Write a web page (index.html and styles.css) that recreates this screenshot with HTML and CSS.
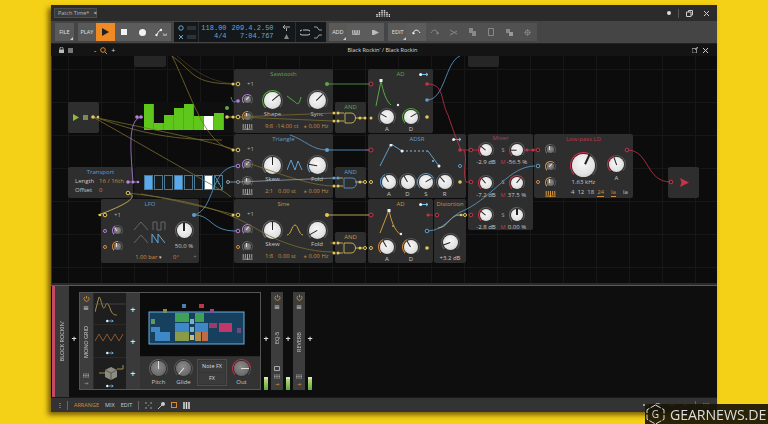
FILE: index.html
```html
<!DOCTYPE html>
<html lang="en">
<head>
    <meta charset="UTF-8">
    <title>Patch Time</title>
    <link rel="stylesheet" href="styles.css">
</head>
<body>
<svg class="defs" width="0" height="0">
    <symbol id="link" viewBox="0 0 10 5">
        <circle cx="1.6" cy="2.5" r="1.5" fill="#e8f4fa"/>
        <path d="M3 2.5H9M7 1l2 1.5L7 4" stroke="#6fc0e8" stroke-width="1" fill="none"/>
    </symbol>
    <symbol id="power" viewBox="0 0 8 8">
        <path d="M2.3 2.2a2.8 2.8 0 1 0 3.4 0M4 1v3" stroke="#d98a30" stroke-width="1" fill="none"/>
    </symbol>
    <symbol id="folder" viewBox="0 0 8 8">
        <path d="M1 1.5h6v5H1z" fill="#9a9a9a"/><path d="M1 3h6" stroke="#444" stroke-width=".7"/>
    </symbol>
    <symbol id="piano" viewBox="0 0 12 7">
        <path d="M1 0v5M3.5 0v5M6 0v7M8.5 0v5M11 0v5M0 6h12" stroke="currentColor" stroke-width="1.1" fill="none"/>
    </symbol>
    <symbol id="dots" viewBox="0 0 8 6">
        <path d="M0 1h2M3 1h2M6 1h2M0 3h2M3 3h2M6 3h2M0 5h2M3 5h2M6 5h2" stroke="#bbb" stroke-width="1"/>
    </symbol>
</svg>

<div class="window">
    <!-- title bar -->
    <div class="titlebar">
        <div class="tab">Patch Time* <span class="tab-x">×</span></div>
        <svg class="logo" width="14" height="9" viewBox="0 0 14 9">
            <path d="M1 5v3M3.5 3v5M6 1v7M8.5 1v7M11 3v5M13.500 5v3" stroke="#ddd" stroke-width="1.500" stroke-dasharray="1.200 .6"/>
        </svg>
        <div class="win-btns">
            <span class="win-dot"></span>
            <span class="win-sep"></span>
            <svg width="7" height="7" viewBox="0 0 7 7"><path d="M.5 2h4.500v4.500H.5zM2.500 2V.5H6.500v4.500H5" stroke="#ccc" fill="none"/></svg>
            <svg width="7" height="7" viewBox="0 0 7 7"><path d="M1 1l5 5M6 1l-5 5" stroke="#ccc"/></svg>
        </div>
    </div>

    <!-- toolbar -->
    <div class="toolbar">
        <div class="btn-group">
            <div class="btn wide corner">FILE</div>
        </div>
        <div class="btn-group">
            <div class="btn wide">PLAY</div>
            <div class="btn play"><svg width="8" height="8" viewBox="0 0 8 8"><path d="M1 0l7 4-7 4z" fill="#222"/></svg></div>
            <div class="btn"><span class="stop"></span></div>
            <div class="btn"><span class="rec"></span></div>
            <div class="btn"><svg width="12" height="9" viewBox="0 0 12 9"><path d="M1 7c2 0 2-5 5-5" stroke="#eee" fill="none"/><circle cx="1.500" cy="7" r="1.200" fill="#eee"/><circle cx="6" cy="2" r="1.200" fill="#eee"/><path d="M8 5l1 3 1-2 1 2 1-3" stroke="#ccc" stroke-width=".6" fill="none"/></svg></div>
        </div>
        <div class="display">
            <div class="disp-meter">
                <div><svg width="6" height="6" viewBox="0 0 6 6"><circle cx="3" cy="3" r="2.200" stroke="#6aa6c8" fill="none"/></svg><i></i></div>
                <div><svg width="6" height="6" viewBox="0 0 6 6"><path d="M1 1l4 4M5 1l-4 4" stroke="#6aa6c8"/></svg><i></i></div>
            </div>
            <div class="disp-nums">
                <span>118.00</span><span>209.4.2.50</span>
                <span>4/4</span><span>7:04.767</span>
            </div>
            <div class="disp-side">
                <svg width="7" height="6" viewBox="0 0 7 6"><path d="M0 2h7M2 0l-2 2 2 2M3.500 3v3" stroke="#aaa" fill="none"/></svg>
                <svg width="5" height="5" viewBox="0 0 5 5"><path d="M2.500 0L5 5H0z" fill="#888"/></svg>
            </div>
            <div class="disp-loop">
                <svg width="10" height="7" viewBox="0 0 10 7"><path d="M3 1h5a1.500 1.500 0 0 1 0 5H2a1.500 1.500 0 0 1 0-5" stroke="#bbb" fill="none"/></svg>
                <div class="disp-arrows">
                    <svg width="8" height="5" viewBox="0 0 8 5"><path d="M0 1h3l2 3h3" stroke="#999" fill="none"/></svg>
                    <svg width="8" height="5" viewBox="0 0 8 5"><path d="M0 4h3l2-3h3" stroke="#999" fill="none"/></svg>
                </div>
            </div>
        </div>
        <div class="btn-group">
            <div class="btn wide corner">ADD</div>
            <div class="btn"><svg width="8" height="7"><use href="#piano" color="#eee"/></svg></div>
            <div class="btn"><svg width="7" height="7" viewBox="0 0 7 7"><path d="M0 1h2l5 2.500L2 6H0z" fill="#bbb"/></svg></div>
        </div>
        <div class="btn-group">
            <div class="btn wide corner">EDIT</div>
            <div class="btn"><svg width="9" height="6" viewBox="0 0 9 6"><path d="M1 5c1-5 5-5 7-1M1 5V3M1 5l2-1" stroke="#eee" fill="none"/></svg></div>
            <div class="btn off"><svg width="9" height="6" viewBox="0 0 9 6"><path d="M8 5C7 0 3 0 1 4M8 5V3M8 5L6 4" stroke="#888" fill="none"/></svg></div>
            <div class="btn off"><svg width="8" height="7" viewBox="0 0 8 7"><path d="M1 1l7 4M1 6l7-4" stroke="#888"/></svg></div>
            <div class="btn off"><svg width="7" height="8" viewBox="0 0 7 8"><path d="M0 0h4v5H0zM3 3h4v5H3z" fill="#888"/></svg></div>
            <div class="btn off"><svg width="6" height="8" viewBox="0 0 6 8"><path d="M.5.5h5v7h-5z" stroke="#888" fill="none"/></svg></div>
            <div class="btn off"><svg width="7" height="7" viewBox="0 0 7 7"><path d="M0 0h4v4H0z" fill="#888"/><path d="M3 3h4v4H3z" fill="#999"/></svg></div>
            <div class="btn off"><svg width="7" height="7" viewBox="0 0 7 7"><circle cx="3.500" cy="3.500" r="2.300" stroke="#888" fill="none"/><path d="M3.500 0v7M0 3.500h7" stroke="#888" stroke-width=".6"/></svg></div>
        </div>
    </div>

    <!-- panel header -->
    <div class="panelhead">
        <div class="head-left">
            <svg width="5" height="6" viewBox="0 0 5 6"><path d="M0 2.500h5V6H0z" fill="#bbb"/><path d="M1 2.500V1.500a1.500 1.500 0 0 1 3 0v1" stroke="#bbb" fill="none"/></svg>
            <svg width="5" height="5" viewBox="0 0 5 5"><path d="M0 0h5v5H0z" fill="#777"/></svg>
            <span class="head-gap"></span>
            <span class="zoom-sign">-</span>
            <svg width="7" height="7" viewBox="0 0 7 7"><circle cx="3" cy="3" r="2.300" stroke="#d98a30" fill="none"/><path d="M5 5l2 2" stroke="#d98a30"/></svg>
            <span class="zoom-sign">+</span>
        </div>
        <div class="head-title">Black Rockin' / Black Rockin</div>
        <div class="head-right">
            <svg width="6" height="6" viewBox="0 0 6 6"><path d="M0 1.500h4.500V6H0zM3 3l3-3M4 0h2v2" stroke="#aaa" fill="none" stroke-width=".8"/></svg>
            <svg width="5" height="5" viewBox="0 0 5 5"><path d="M0 0l5 5M5 0L0 5" stroke="#ccc"/></svg>
        </div>
    </div>

    <!-- the patch: modules sit on a free canvas -->
    <div class="canvas">
        <div class="mod stub stub-a"></div>
        <div class="mod stub stub-b"></div>

        <div class="mod m-play">
            <svg width="6" height="7" viewBox="0 0 6 7"><path d="M0 0l6 3.500L0 7z" fill="#8fb83c"/></svg>
            <span class="play-stop"></span>
        </div>

        <div class="mod m-seq-a">
            <div class="bars">
                <i style="height:26px"></i><i style="height:7px"></i><i style="height:15px"></i><i style="height:22px"></i>
                <i style="height:26px"></i><i style="height:14px"></i><i class="lit" style="height:14px"></i><i style="height:17px"></i>
            </div>
        </div>

        <div class="mod m-seq-b">
            <div class="steps">
                <i class="on"></i><i></i><i></i><i class="on"></i><i></i><i></i><i class="lit"></i><i class="slash"></i>
            </div>
        </div>

        <div class="mod m-transport">
            <div class="title t-blue">Transport</div>
            <div class="tr-row"><span>Length</span><span class="val">16 / 16th</span></div>
            <div class="tr-row"><span>Offset</span><span class="val">0</span></div>
        </div>

        <div class="mod m-lfo">
            <div class="title t-blue">LFO</div>
            <div class="plus-row lfo-plus">+1</div>
            <div class="side">
                <b class="knob sm dark c-purple" style="--a:-30deg"></b>
                <b class="knob sm dark c-orange" style="--a:0deg"></b>
            </div>
            <svg class="lfo-waves" width="38" height="26" viewBox="0 0 38 26">
                <path d="M3 11L10 3 17 11" stroke="#666" fill="none"/>
                <path d="M22 11V3h4v8h4V3h4v8" stroke="#666" fill="none"/>
                <path d="M3 24L10 16 17 24" stroke="#666" fill="none"/>
                <path d="M21 24V15l6 9V15l7 9" stroke="#62a9dc" fill="none"/>
            </svg>
            <div class="lfo-knob">
                <b class="knob md c-gray" style="--a:0deg"></b>
                <span>50.0 %</span>
            </div>
            <div class="foot lfo-foot">
                <span>1.00 bar <em>▾</em></span><span>0°</span><span class="dim">÷</span>
            </div>
        </div>

        <div class="mod osc m-saw">
            <div class="title t-green">Sawtooth</div>
            <div class="plus-row">+1</div>
            <div class="side">
                <b class="knob sm dark c-purple" style="--a:40deg"></b>
                <b class="knob sm dark c-orange" style="--a:0deg"></b>
                <svg class="pn" width="11" height="6"><use href="#piano" color="#aaa"/></svg>
            </div>
            <b class="knob lg c-green" style="--a:50deg"></b>
            <svg class="wave" width="16" height="11" viewBox="0 0 16 11"><path d="M0 1L8 7c2 2 4 4 6-5" stroke="#58a848" fill="none"/></svg>
            <b class="knob lg c-gray" style="--a:45deg"></b>
            <span class="lab">Shape</span><span></span><span class="lab">Sync</span>
            <div class="foot"><span>9:8</span><span>-14.00 ct</span><span>± 0.00 Hz</span></div>
        </div>

        <div class="mod osc m-tri">
            <div class="title t-blue">Triangle</div>
            <div class="plus-row">+1</div>
            <div class="side">
                <b class="knob sm dark c-purple" style="--a:40deg"></b>
                <b class="knob sm dark c-gray" style="--a:0deg"></b>
                <svg class="pn" width="11" height="6"><use href="#piano" color="#aaa"/></svg>
            </div>
            <b class="knob lg c-gray" style="--a:0deg"></b>
            <svg class="wave" width="16" height="12" viewBox="0 0 16 12"><path d="M0 11L4 1l4 10 3-9 4 9" stroke="#5e9fd2" fill="none"/></svg>
            <b class="knob lg c-blue" style="--a:-80deg"></b>
            <span class="lab">Skew</span><span></span><span class="lab">Fold</span>
            <div class="foot"><span>2:1</span><span>0.00 st</span><span>± 0.00 Hz</span></div>
        </div>

        <div class="mod osc m-sine">
            <div class="title t-orange">Sine</div>
            <div class="plus-row">+1</div>
            <div class="side">
                <b class="knob sm dark c-purple" style="--a:40deg"></b>
                <b class="knob sm dark c-gray" style="--a:0deg"></b>
                <svg class="pn" width="11" height="6"><use href="#piano" color="#aaa"/></svg>
            </div>
            <b class="knob lg c-gray" style="--a:0deg"></b>
            <svg class="wave" width="16" height="12" viewBox="0 0 16 12"><path d="M0 11C4 11 5 1 8 1s4 10 8 10" stroke="#cda74a" fill="none"/></svg>
            <b class="knob lg c-gray" style="--a:-120deg"></b>
            <span class="lab">Skew</span><span></span><span class="lab">Fold</span>
            <div class="foot"><span>1:8</span><span>0.00 st</span><span>± 0.00 Hz</span></div>
        </div>

        <div class="mod gate m-and-a"><div class="title t-green">AND</div></div>
        <div class="mod gate m-and-b"><div class="title t-blue">AND</div></div>
        <div class="mod gate m-and-c"><div class="title t-orange">AND</div></div>

        <div class="mod env m-ad-a">
            <div class="title t-green">AD<svg class="lnk" width="10" height="5"><use href="#link"/></svg></div>
            <svg class="env-shape" width="65" height="28" viewBox="0 0 65 28">
                <path d="M8 27L13 2c2 10 5 20 10 24" stroke="#5aa848" fill="none"/>
                <rect x="11.500" y="0" width="3" height="3" fill="#eee"/><circle cx="30" cy="26" r="1.200" fill="#eee"/>
            </svg>
            <div class="knobs">
                <b class="knob ad c-gray" style="--a:-60deg"></b>
                <b class="knob ad c-green" style="--a:60deg"></b>
            </div>
            <div class="knob-labs"><span>A</span><span>D</span></div>
        </div>

        <div class="mod env m-adsr">
            <div class="title t-blue">ADSR<svg class="lnk" width="10" height="5"><use href="#link"/></svg></div>
            <svg class="env-shape" width="98" height="28" viewBox="0 0 98 28">
                <path d="M12 22L23 0l11 7" stroke="#5e9fd2" fill="none"/>
                <path d="M34 7H60" stroke="#8cbbe0" stroke-dasharray="2 2" fill="none"/>
                <path d="M60 7l11 15" stroke="#5e9fd2" fill="none"/>
                <circle cx="23" cy="1" r="1.500" fill="#eee"/><circle cx="34" cy="7" r="1.500" fill="#eee"/>
                <circle cx="65" cy="17" r="1" fill="#8cbbe0"/><circle cx="71" cy="22" r="1.500" fill="#eee"/>
            </svg>
            <div class="knobs four">
                <b class="knob ad c-blue" style="--a:-30deg"></b>
                <b class="knob ad c-gray" style="--a:-30deg"></b>
                <b class="knob ad c-blue" style="--a:60deg"></b>
                <b class="knob ad c-gray" style="--a:-40deg"></b>
            </div>
            <div class="knob-labs four"><span>A</span><span>D</span><span>S</span><span>R</span></div>
        </div>

        <div class="mod env m-ad-b">
            <div class="title t-orange">AD<svg class="lnk" width="10" height="5"><use href="#link"/></svg></div>
            <svg class="env-shape" width="65" height="28" viewBox="0 0 65 28">
                <path d="M12 24L21 1c2 10 5 20 12 25" stroke="#c79a45" fill="none"/>
                <rect x="19.500" y="0" width="3" height="3" fill="#eee"/><circle cx="25" cy="17" r="1" fill="#c79a45"/><circle cx="33" cy="25" r="1.200" fill="#eee"/>
            </svg>
            <div class="knobs">
                <b class="knob ad c-orange" style="--a:-30deg"></b>
                <b class="knob ad c-orange" style="--a:-30deg"></b>
            </div>
            <div class="knob-labs"><span>A</span><span>D</span></div>
        </div>

        <div class="mod m-dist">
            <div class="title t-orange">Distortion</div>
            <b class="knob md c-gray" style="--a:-110deg"></b>
            <span class="lab">+3.2 dB</span>
        </div>

        <div class="mod m-mixer">
            <div class="title t-red">Mixer</div>
            <div class="mix-row">
                <b class="knob mx c-red" style="--a:-50deg"></b><span class="s">S</span><b class="knob mx c-red" style="--a:-90deg"></b>
                <span class="lab">-2.9 dB</span><span class="m">M</span><span class="lab">-56.5 %</span>
            </div>
            <div class="mix-row">
                <b class="knob mx c-red" style="--a:-40deg"></b><span class="s">S</span><b class="knob mx c-red" style="--a:40deg"></b>
                <span class="lab">-7.2 dB</span><span class="m">M</span><span class="lab">37.5 %</span>
            </div>
            <div class="mix-row">
                <b class="knob mx c-red" style="--a:-50deg"></b><span class="s">S</span><b class="knob mx c-gray" style="--a:0deg"></b>
                <span class="lab">-2.8 dB</span><span class="m">M</span><span class="lab">0.00 %</span>
            </div>
        </div>

        <div class="mod m-lp">
            <div class="title t-red">Low-pass LD</div>
            <div class="side lp-side">
                <b class="knob sm dark c-gray" style="--a:0deg"></b>
                <b class="knob sm dark c-orange" style="--a:40deg"></b>
                <b class="knob sm dark c-orange" style="--a:0deg"></b>
                <svg class="pn" width="11" height="6"><use href="#piano" color="#e8a040"/></svg>
            </div>
            <div class="lp-main">
                <b class="knob xl c-red" style="--a:25deg"></b>
                <span class="lab">1.63 kHz</span>
            </div>
            <div class="lp-res">
                <b class="knob md c-red" style="--a:-20deg"></b>
                <span class="lab">A</span>
            </div>
            <div class="lp-foot">
                <span>4</span><span>12</span><span>18</span><span class="sel">24</span>
                <span class="lp-ic sel">la</span><span class="lp-ic">la</span>
            </div>
        </div>

        <div class="mod m-out">
            <svg width="9" height="9" viewBox="0 0 9 9"><path d="M0 0l9 4.500L0 9l1.500-4.500z" fill="#c5344a"/></svg>
        </div>

        <!-- cables and ports, in window pixels -->
        <svg class="cables" viewBox="51 56 666 227" width="666" height="227">
            <g class="olive">
                <path d="M172 56C195 72 190 84 236 84"/>
                <path d="M177 56C190 66 205 82 236 84" opacity=".5"/>
                <path d="M172 56C192 96 205 148 236 150"/>
                <path d="M93 117L226 193 231 197"/>
                <path d="M93 117C130 125 200 138 236 150"/>
                <path d="M93 117C120 124 150 140 222 140"/>
                <path d="M141 194C165 198 200 206 236 215"/>
                <path d="M227 117H238L334 113"/>
                <path d="M227 117H238L334 121"/>
                <path d="M245 162C275 172 310 186 334 186"/>
                <path d="M128 193C170 198 220 205 260 231 285 245 310 252 334 252"/>
                <path d="M330 243H334"/>
            </g>
            <g class="yellow">
                <path d="M128 193C142 197 118 208 98 215" stroke-width="1.300"/>
                <path d="M327 215H371" stroke-width="1.300"/>
                <path d="M338 113H344M338 121H344"/>
                <path d="M355 118H364M355 182H364M355 248H364"/>
                <path d="M338 178H343M338 186H343"/>
                <path d="M338 243H343M338 253H343"/>
                <path d="M438 228C448 228 450 214 460 215"/>
                <path d="M460 215H467"/>
                <circle class="dot" cx="233" cy="117" r="1.500"/><circle class="dot" cx="227" cy="117" r="1.800"/>
                <circle class="ring" cx="238" cy="117" r="1.800"/>
                <circle class="dot" cx="93" cy="117" r="1.800"/><circle class="dot" cx="98" cy="117" r="1.300"/>
                <circle class="dot" cx="233" cy="84" r="1.500"/><circle class="ring" cx="238" cy="84" r="1.800"/>
                <circle class="dot" cx="233" cy="150" r="1.500"/><circle class="ring" cx="238" cy="150" r="1.800"/>
                <circle class="dot" cx="233" cy="215" r="1.500"/><circle class="ring" cx="238" cy="215" r="1.800"/>
                <circle class="ring" cx="128" cy="193" r="1.800"/>
                <circle class="ring" cx="105" cy="215" r="1.800"/><circle class="dot" cx="100" cy="215" r="1.300"/>
                <circle class="dot" cx="327" cy="215" r="2"/>
                <circle class="dot" cx="334" cy="113" r="1.500"/><circle class="dot" cx="338" cy="113" r="1.500"/>
                <circle class="dot" cx="334" cy="121" r="1.500"/><circle class="dot" cx="338" cy="121" r="1.500"/>
                <circle class="dot" cx="334" cy="186" r="1.500"/><circle class="dot" cx="338" cy="186" r="1.500"/>
                <circle class="dot" cx="334" cy="243" r="1.500"/><circle class="dot" cx="338" cy="243" r="1.500"/>
                <circle class="dot" cx="334" cy="253" r="1.500"/><circle class="dot" cx="338" cy="253" r="1.500"/>
                <circle class="dot" cx="360" cy="118" r="1.500"/><circle class="dot" cx="365" cy="118" r="1.500"/><circle class="dot" cx="371" cy="118" r="1.500"/>
                <circle class="dot" cx="360" cy="182" r="1.500"/><circle class="ring" cx="365" cy="182" r="1.500"/><circle class="ring" cx="371" cy="182" r="1.500"/>
                <circle class="dot" cx="360" cy="248" r="1.500"/><circle class="ring" cx="365" cy="248" r="1.500"/><circle class="ring" cx="371" cy="248" r="1.500"/>
                <circle class="dot" cx="427" cy="117" r="1.800"/>
                <circle class="dot" cx="460" cy="182" r="1.800"/>
                <circle class="dot" cx="427" cy="248" r="1.800"/>
                <circle class="dot" cx="461" cy="215" r="1.300"/><circle class="ring" cx="465" cy="215" r="1.500"/>
                <path d="M345 113H351C357 113 357 123 351 123H345z"/>
            </g>
            <g class="green">
                <path d="M327 84H371"/>
                <circle class="dot" cx="327" cy="84" r="2"/>
                <circle class="dot" cx="227" cy="108" r="2"/>
            </g>
            <g class="gate-blue blue">
                <path d="M344 178H352C358 178 358 188 352 188H344z"/>
            </g>
            <g class="yellow">
                <path d="M344 243H351C357 243 357 253 351 253H344z"/>
            </g>
            <g class="purple">
                <path d="M143 117C128 117 130 145 133 182" stroke-width="1.200"/>
                <path d="M128 182H138"/>
                <circle class="dot" cx="137" cy="117" r="1.800"/><circle class="dot" cx="141" cy="117" r="1.800"/>
                <circle class="dot" cx="128" cy="182" r="1.800"/><circle class="dot" cx="133" cy="182" r="1.500"/><circle class="dot" cx="138" cy="182" r="1.300"/>
                <circle class="dot" cx="238" cy="101" r="1.800"/>
                <circle class="ring" cx="238" cy="166" r="1.800"/>
                <circle class="ring" cx="238" cy="231" r="1.800"/>
                <circle class="ring" cx="105" cy="231" r="1.500"/>
            </g>
            <g class="blue">
                <path d="M194 215C215 210 210 168 236 166"/>
                <path d="M194 215C212 215 210 231 236 231"/>
                <path d="M231 97C233 105 235 101 238 101"/>
                <path d="M290 135C305 140 312 150 327 150H371"/>
                <path d="M427 100C445 100 445 62 460 56"/>
                <path d="M427 231C445 231 450 215 465 210 495 195 510 166 535 166"/>
                <path d="M334 178H338"/>
                <circle class="dot" cx="327" cy="150" r="2"/>
                <circle class="dot" cx="194" cy="215" r="2"/>
                <circle class="dot" cx="427" cy="100" r="1.800"/>
                <circle class="ring" cx="427" cy="231" r="1.800"/>
                <circle class="ring" cx="538" cy="166" r="1.800"/>
                <circle class="dot" cx="334" cy="178" r="1.500"/><circle class="dot" cx="338" cy="178" r="1.500"/>
                <circle class="ring" cx="460" cy="166" r="1.500"/>
            </g>
            <g class="steel">
                <path d="M228 182H238L334 178"/>
                <circle class="ring" cx="228" cy="182" r="1.500"/>
                <circle class="ring" cx="238" cy="182" r="1.500"/>
            </g>
            <g class="orange">
                <circle class="ring" cx="105" cy="247" r="1.500"/>
                <circle class="ring" cx="238" cy="247" r="1.500"/>
                <circle class="ring" cx="538" cy="182" r="1.500"/>
            </g>
            <g class="red">
                <path d="M427 84C445 84 440 100 448 115 453 130 456 138 461 150"/>
                <path d="M462 150H480" stroke-width="1.200"/>
                <path d="M464 150C468 160 462 170 466 182H471" stroke-width="1.400"/>
                <path d="M525 150H538" stroke-width="1.200"/>
                <path d="M627 150C650 150 645 182 671 182"/>
                <path d="M371 215H367"/>
                <path d="M427 215H433"/>
                <path d="M371 150H366"/>
                <circle class="ring" cx="371" cy="84" r="2"/>
                <circle class="dot" cx="427" cy="84" r="1.800"/>
                <circle class="ring" cx="371" cy="150" r="2"/>
                <circle class="ring" cx="371" cy="215" r="2"/>
                <circle class="dot" cx="428" cy="215" r="1.500"/><circle class="ring" cx="437" cy="215" r="1.800"/>
                <circle class="dot" cx="460" cy="150" r="1.800"/><circle class="ring" cx="471" cy="150" r="1.800"/>
                <circle class="ring" cx="471" cy="182" r="1.800"/>
                <circle class="ring" cx="471" cy="215" r="1.800"/>
                <circle class="dot" cx="527" cy="150" r="1.500"/><circle class="dot" cx="533" cy="150" r="1.500"/><circle class="ring" cx="538" cy="150" r="1.800"/>
                <circle class="ring" cx="627" cy="150" r="1.800"/>
                <circle class="ring" cx="671" cy="182" r="1.800"/>
            </g>
        </svg>
    </div>

    <!-- device panel -->
    <div class="devices">
        <div class="track-head"><span class="vtext">BLOCK ROCKIN'</span></div>
        <div class="add-gap"><span class="plus">+</span></div>

        <div class="device-main">
            <div class="dev-strip">
                <svg width="7" height="7"><use href="#power"/></svg>
                <svg width="6" height="6"><use href="#folder"/></svg>
                <span class="vtext">MONO GRID</span>
                <svg width="6" height="5"><use href="#dots"/></svg>
                <span class="arrow-ic">⇥</span>
            </div>
            <div class="thumbs">
                <div class="thumb">
                    <svg width="30" height="22" viewBox="0 0 30 22"><path d="M0 18L4 3c2 0 3 12 5 11 2 0 2-12 7 3 2 4 4 4 6 4" stroke="#a88a4a" fill="none"/><path d="M0 10H30" stroke="#666" stroke-width=".5"/></svg>
                    <svg class="lnk-b" width="8" height="4"><use href="#link"/></svg>
                </div>
                <div class="thumb">
                    <svg width="30" height="22" viewBox="0 0 30 22"><path d="M0 15L4 8l4 7 4-7 4 7 4-7 4 7 4-7" stroke="#8a5a32" fill="none"/></svg>
                    <svg class="lnk-b" width="8" height="4"><use href="#link"/></svg>
                </div>
                <div class="thumb">
                    <svg width="30" height="22" viewBox="0 0 30 22"><path d="M4 14h6M22 10h6v-4" stroke="#a88a4a" fill="none"/><path d="M10 11l6-3 6 3v7l-6 3-6-3z" fill="#8c8c80"/><path d="M10 11l6 3 6-3M16 14v7" stroke="#555" fill="none"/></svg>
                    <svg class="lnk-b" width="8" height="4"><use href="#link"/></svg>
                </div>
            </div>
            <div class="plus-col">
                <span class="plus">+</span><span class="plus">+</span><span class="plus">+</span>
            </div>
            <div class="dev-body">
                <svg class="grid-view" viewBox="0 0 120 63" width="120" height="63">
                    <rect x="9" y="19" width="95" height="32" fill="#17405f" stroke="#6ab0e0"/>
                    <rect x="23" y="16" width="4" height="4" fill="#7f8a5a"/><rect x="42" y="11" width="4" height="4" fill="#4b7fb0"/>
                    <rect x="59" y="11" width="5" height="4" fill="#c0344a"/><rect x="70" y="16" width="4" height="4" fill="#8a4a90"/>
                    <rect x="11" y="26" width="4" height="5" fill="#5f9a5a"/><rect x="11" y="34" width="9" height="5" fill="#3f88c8"/>
                    <rect x="15" y="39" width="15" height="9" fill="#3f88c8"/>
                    <rect x="35" y="20" width="14" height="9" fill="#3fa058"/><rect x="35" y="30" width="14" height="9" fill="#3f88c8"/>
                    <rect x="35" y="39" width="14" height="9" fill="#8a9a48"/><rect x="50" y="26" width="4" height="5" fill="#7ab0c8"/>
                    <rect x="50" y="34" width="4" height="5" fill="#7ab0c8"/><rect x="50" y="42" width="4" height="5" fill="#c8c078"/>
                    <rect x="55" y="20" width="9" height="9" fill="#3fa058"/><rect x="55" y="30" width="13" height="9" fill="#3f88c8"/>
                    <rect x="55" y="39" width="6" height="9" fill="#b08a48"/><rect x="62" y="39" width="6" height="9" fill="#c06a48"/>
                    <rect x="69" y="30" width="8" height="5" fill="#a03a6a"/><rect x="79" y="30" width="13" height="9" fill="#c0386a"/>
                    <rect x="97" y="35" width="4" height="5" fill="#6a4a80"/>
                </svg>
                <div class="dev-ctrl">
                    <div class="ctrl-k"><b class="knob pk dark c-gray" style="--a:0deg"></b><span>Pitch</span></div>
                    <div class="ctrl-k"><b class="knob pk dark c-gray" style="--a:-140deg"></b><span>Glide</span></div>
                    <div class="fx-box"><span>Note FX</span><span>FX</span></div>
                    <div class="ctrl-k out-k"><b class="knob md dark c-red" style="--a:90deg"></b><span>Out</span></div>
                </div>
            </div>
        </div>

        <div class="add-gap meter-gap"><span class="plus">+</span><i class="meter"></i></div>
        <div class="dev-strip lone">
            <svg width="7" height="7"><use href="#power"/></svg>
            <svg width="6" height="6"><use href="#folder"/></svg>
            <span class="vtext">EQ-5</span>
            <svg width="6" height="6" viewBox="0 0 6 6"><path d="M.5 1.500h5v4h-5z" stroke="#aaa" fill="none"/></svg>
            <svg width="6" height="5"><use href="#dots"/></svg>
            <span class="arrow-ic">⇥</span>
        </div>
        <div class="add-gap meter-gap"><span class="plus">+</span><i class="meter"></i></div>
        <div class="dev-strip lone">
            <svg width="7" height="7"><use href="#power"/></svg>
            <svg width="6" height="6"><use href="#folder"/></svg>
            <span class="vtext">REVERB</span>
            <svg width="6" height="5"><use href="#dots"/></svg>
            <span class="arrow-ic">⇥</span>
        </div>
        <div class="add-gap meter-gap"><span class="plus">+</span><i class="meter"></i></div>
    </div>

    <!-- bottom bar -->
    <div class="bottombar">
        <span class="bb-i">⁝</span>
        <span class="bb-sep"></span>
        <span class="tab-on">ARRANGE</span>
        <span>MIX</span>
        <span>EDIT</span>
        <span class="bb-sep"></span>
        <svg width="7" height="7" viewBox="0 0 7 7"><circle cx="1" cy="1" r=".8" fill="#aaa"/><circle cx="6" cy="1" r=".8" fill="#aaa"/><circle cx="1" cy="6" r=".8" fill="#aaa"/><circle cx="6" cy="6" r=".8" fill="#aaa"/><circle cx="3.500" cy="3.500" r=".8" fill="#777"/></svg>
        <svg width="7" height="7" viewBox="0 0 7 7"><path d="M0 7l4-4" stroke="#bbb"/><circle cx="5" cy="2" r="2" fill="#ccc"/></svg>
        <span class="sq"></span>
        <svg width="7" height="7" viewBox="0 0 7 7"><path d="M1 0v7M3.500 0v7M6 0v7" stroke="#ddd" stroke-width="1.500"/></svg>
        <div class="bb-right">
            <svg width="6" height="3"><rect width="6" height="2" fill="#999"/></svg>
            <svg width="6" height="4"><path d="M0 0h3l3 2-3 2H0z" fill="#999"/></svg>
            <svg width="6" height="3"><rect width="6" height="2" fill="#888"/></svg>
            <svg width="6" height="3"><rect x="1" width="4" height="2" fill="#888"/></svg>
            <span class="bb-sep"></span>
            <svg width="6" height="5"><use href="#dots"/></svg>
        </div>
    </div>
</div>

<!-- watermark -->
<div class="watermark">
    <svg width="19" height="21" viewBox="0 0 19 21"><path d="M9.500 1L18 5.700v9.600L9.500 20 1 15.300V5.700z" stroke="#ddd" fill="none" stroke-dasharray="6 1.500"/></svg>
    <span class="wm-g">G</span>
    <span class="wm-text">GEARNEWS.DE</span>
</div>
</body>
</html>
```

FILE: styles.css
```css
* {
    margin: 0;
    padding: 0;
    box-sizing: border-box;
}

html, body {
    height: 424px;
    overflow: hidden;
}

body {
    background: #f4d116;
    padding: 5px 0 0 51px;
    font-family: "Open Sans", "Liberation Sans", sans-serif;
    font-size: 6px;
    color: #cfcfcf;
    position: relative;
}

.defs {
    position: absolute;
}

svg {
    display: block;
    flex: none;
}

/* the source picture is a soft jpeg */
.window {
    width: 666px;
    height: 407px;
    background: #2a2a2a;
    box-shadow: -3px 3px 5px rgba(80, 55, 0, .75);
    display: flex;
    flex-direction: column;
    filter: blur(.35px);
}

/* title bar */
.titlebar {
    height: 16px;
    background: #2b2b2b;
    display: flex;
    align-items: center;
    padding: 0 7px 0 3px;
    position: relative;
}

.tab {
    width: 43px;
    height: 10px;
    background: #3a3a3a;
    border: 1px solid #4d4d4d;
    color: #bbb;
    line-height: 8px;
    font-size: 5.5px;
    padding-left: 3px;
    white-space: nowrap;
}

.tab-x {
    margin-left: 3px;
    color: #eee;
}

.logo {
    margin-left: 279px;
}

.win-btns {
    margin-left: auto;
    display: flex;
    align-items: center;
}

.win-dot {
    width: 4px;
    height: 4px;
    border-radius: 50%;
    background: #ddd;
}

.win-sep {
    width: 1px;
    height: 9px;
    background: #555;
    margin: 0 7px;
}

.win-btns svg + svg {
    margin-left: 10px;
}

/* toolbar */
.toolbar {
    height: 23px;
    background: #454545;
    display: flex;
    align-items: center;
    padding-left: 4px;
    gap: 4px;
    border-bottom: 1px solid #222;
}

.btn-group {
    display: flex;
    height: 18px;
}

.btn {
    width: 18.600px;
    height: 100%;
    background: #5c5c5c;
    display: flex;
    align-items: center;
    justify-content: center;
    font-size: 5.500px;
    color: #e0e0e0;
    position: relative;
}

.btn.off {
    background: #515151;
}

.btn.wide {
    background: #595959;
}

.btn.corner::after {
    content: "";
    position: absolute;
    right: 1px;
    bottom: 1px;
    border-style: solid;
    border-width: 0 0 3px 3px;
    border-color: transparent transparent #ccc transparent;
}

.btn.play {
    background: #f08a24;
}

.stop {
    width: 6px;
    height: 6px;
    background: #f2f2f2;
}

.rec {
    width: 7px;
    height: 7px;
    border-radius: 50%;
    background: #f2f2f2;
}

.display {
    width: 152px;
    height: 20px;
    margin: 0 -1px;
    background: #15181b;
    display: flex;
    align-items: center;
}

.disp-meter {
    width: 25px;
    height: 100%;
    border-right: 1px solid #2c3034;
    display: flex;
    flex-direction: column;
    justify-content: space-around;
    padding: 1px 2px 1px 4px;
}

.disp-meter div {
    display: flex;
    align-items: center;
    gap: 3px;
}

.disp-meter i {
    width: 10px;
    height: 4px;
    background: #2b3238;
}

.disp-nums {
    width: 76px;
    font-family: "Liberation Mono", monospace;
    font-size: 7px;
    line-height: 8.500px;
    color: #63a8d6;
    display: grid;
    grid-template-columns: 28px 47px;
    justify-items: end;
}

.disp-side {
    width: 18px;
    height: 100%;
    display: flex;
    flex-direction: column;
    justify-content: space-around;
    align-items: center;
    padding: 2px 0;
    border-right: 1px solid #2c3034;
    margin-left: 3px;
}

.disp-loop {
    flex: 1;
    display: flex;
    align-items: center;
    gap: 4px;
    padding-left: 4px;
}

.disp-arrows {
    display: flex;
    flex-direction: column;
    gap: 3px;
}

/* panel header */
.panelhead {
    height: 12px;
    background: #141414;
    display: grid;
    grid-template-columns: 1fr auto 1fr;
    align-items: center;
    padding: 0 8px;
}

.head-left,
.head-right {
    display: flex;
    align-items: center;
    gap: 4px;
}

.head-gap {
    width: 13px;
}

.zoom-sign {
    color: #ddd;
    font-size: 7px;
    line-height: 7px;
}

.head-title {
    color: #dcdcdc;
    font-size: 5.500px;
    padding-right: 3px;
}

.head-right {
    justify-content: flex-end;
    gap: 5px;
    padding-right: 1px;
}

/* canvas */
.canvas {
    height: 227px;
    position: relative;
    overflow: hidden;
    background-color: #0c0c0c;
    background-image:
        linear-gradient(90deg, #171717 1px, transparent 1px),
        linear-gradient(#171717 1px, transparent 1px);
    background-size: 33px 33px;
    background-position: 16px 13px;
    border-left: 1px solid #333;
}

.mod {
    position: absolute;
    background: #2e2e2e;
    border-radius: 2px;
}

.cables {
    position: absolute;
    left: -1px;
    top: 0;
    pointer-events: none;
}

.cables path {
    fill: none;
    stroke: currentColor;
    stroke-width: .8;
}

.cables .dot {
    fill: currentColor;
}

.cables .ring {
    fill: #222;
    stroke: currentColor;
    stroke-width: 1;
}

.olive { color: #7a6c30; }
.yellow { color: #e2c85a; }
.green { color: #5aa848; }
.purple { color: #b583dc; }
.blue { color: #5e9fd2; }
.steel { color: #8ea2ae; }
.orange { color: #dc9040; }
.red { color: #c5344a; }

.title {
    text-align: center;
    font-size: 6px;
    line-height: 10px;
    grid-column: 1 / -1;
    position: relative;
}

.t-green { color: #5aa848; }
.t-blue { color: #5e9fd2; }
.t-orange { color: #d0953e; }
.t-red { color: #c5344a; }

.lnk {
    position: absolute;
    right: 4px;
    top: 3px;
}

.lab {
    color: #c8c8c8;
    font-size: 6px;
    line-height: 7px;
    text-align: center;
    white-space: nowrap;
}

/* knobs */
.knob {
    --c: #777;
    display: block;
    border-radius: 50%;
    position: relative;
    flex: none;
    justify-self: center;
    align-self: center;
    background: conic-gradient(from -135deg, var(--c) 0 calc(var(--a) + 135deg), #565656 0 270deg, transparent 0);
}

.knob::before {
    content: "";
    position: absolute;
    inset: 2px;
    border-radius: 50%;
    background: radial-gradient(circle at 45% 40%, #f8f8f8, #e2e2e2 60%, #b8b8b8);
    box-shadow: 0 0 0 1px #2e2e2e;
}

.knob::after {
    content: "";
    position: absolute;
    left: calc(50% - .7px);
    top: 2px;
    width: 1.400px;
    height: calc(50% - 2px);
    background: #222;
    transform-origin: 50% 100%;
    transform: rotate(var(--a));
}

.knob.dark::before {
    background: radial-gradient(circle at 45% 40%, #8c8c8c, #5a5a5a);
}

.knob.dark::after {
    background: #ddd;
    width: 1px;
}

.c-green { --c: #5aa848; }
.c-blue { --c: #5e9fd2; }
.c-orange { --c: #dc9040; }
.c-red { --c: #c5344a; }
.c-purple { --c: #b583dc; }
.c-gray { --c: #6a6a6a; }

.sm { width: 11px; height: 11px; }
.md { width: 19px; height: 19px; }
.lg { width: 21px; height: 21px; }
.ad { width: 18px; height: 18px; }
.mx { width: 16px; height: 16px; }
.xl { width: 27px; height: 27px; }
.pk { width: 19px; height: 19px; }

/* module places on the canvas */
.stub-a { left: 82px; top: -2px; width: 32px; height: 13px; background: #262626; }
.stub-b { left: 416px; top: -2px; width: 31px; height: 13px; background: #262626; }
.m-play { left: 16px; top: 46px; width: 31px; height: 31px; }
.m-seq-a { left: 83px; top: 46px; width: 98px; height: 31px; background: #0f0f0f; }
.m-seq-b { left: 83px; top: 111px; width: 98px; height: 31px; background: #1a1a1a; }
.m-transport { left: 16px; top: 111px; width: 65px; height: 31px; }
.m-lfo { left: 49px; top: 143px; width: 98px; height: 64px; }
.m-saw { left: 182px; top: 13px; }
.m-tri { left: 182px; top: 78px; }
.m-sine { left: 182px; top: 143px; }
.m-and-a { left: 283px; top: 46px; }
.m-and-b { left: 283px; top: 111px; }
.m-and-c { left: 283px; top: 176px; }
.m-ad-a { left: 316px; top: 13px; width: 65px; }
.m-adsr { left: 316px; top: 78px; width: 98px; }
.m-ad-b { left: 316px; top: 143px; width: 65px; }
.m-dist { left: 382px; top: 143px; width: 32px; height: 64px; }
.m-mixer { left: 416px; top: 78px; width: 65px; height: 96px; }
.m-lp { left: 482px; top: 78px; width: 99px; height: 64px; }
.m-out { left: 616px; top: 111px; width: 31px; height: 31px; }

.m-play {
    display: flex;
    align-items: center;
    padding-left: 5px;
    gap: 4px;
}

.play-stop {
    width: 5px;
    height: 5px;
    background: #7c8a50;
}

.m-out {
    display: flex;
    align-items: center;
    justify-content: center;
    padding-left: 2px;
}

/* sequencers */
.bars {
    display: flex;
    align-items: flex-end;
    height: 28px;
    padding: 2px 0 0 9px;
}

.bars i {
    width: 10px;
    background: #5fc71c;
    border-right: 1px solid #52ad1a;
}

.bars .lit {
    background: #fff;
}

.steps {
    display: flex;
    gap: 1px;
    padding: 8px 0 0 9px;
}

.steps i {
    width: 9px;
    height: 15px;
    border: 1px solid #4b7b94;
}

.steps .on {
    background: #5aa9ee;
}

.steps .lit {
    background: #fff;
}

.steps .slash {
    background: linear-gradient(to top right, transparent 46%, #4b7b94 46% 54%, transparent 54%);
}

/* transport */
.tr-row {
    display: grid;
    grid-template-columns: 24px 1fr;
    line-height: 9px;
    padding-left: 7px;
    color: #c8c8c8;
    white-space: nowrap;
}

.val,
.foot {
    color: #d08a3e;
}

/* oscillators */
.osc {
    width: 99px;
    height: 64px;
    display: grid;
    grid-template-columns: 26px 25px 20px 24px;
    grid-template-rows: 10px 10px 22px 7px 15px;
}

.osc .title {
    width: 99px;
}

.plus-row {
    grid-column: 1 / -1;
    color: #aaa;
    line-height: 10px;
    padding-left: 13px;
}

.side {
    grid-row: 3 / 6;
    grid-column: 1;
    display: flex;
    flex-direction: column;
    align-items: center;
    padding-top: 5px;
    gap: 6px;
}

.side .pn {
    margin-top: -4px;
}

.wave {
    justify-self: center;
    align-self: center;
}

.foot {
    grid-column: 2 / -1;
    grid-row: 5;
    display: grid;
    grid-template-columns: 18px 18px 40px;
    justify-items: center;
    align-items: center;
    white-space: nowrap;
    font-size: 5.800px;
}

/* lfo */
.m-lfo {
    display: grid;
    grid-template-columns: 30px 38px 30px;
    grid-template-rows: 11px 9px 31px 13px;
}

.lfo-plus {
    padding-left: 13px;
}

.lfo-waves {
    grid-column: 2;
    grid-row: 3;
}

.m-lfo .side {
    grid-row: 3 / 5;
    padding: 6px 0 0 2px;
    gap: 5px;
}

.lfo-knob {
    grid-column: 3;
    grid-row: 3;
    display: flex;
    flex-direction: column;
    align-items: center;
    gap: 2px;
    padding-top: 2px;
    color: #c8c8c8;
    white-space: nowrap;
}

.lfo-foot {
    grid-column: 2 / -1;
    grid-row: 4;
    grid-template-columns: 33px 22px 16px;
    justify-content: start;
    padding-left: 1px;
}

.lfo-foot em {
    font-style: normal;
    color: #ccc;
    font-size: 5px;
}

.lfo-foot .dim {
    color: #888;
}

/* gates and envelopes */
.gate {
    width: 31px;
    height: 31px;
}

.env {
    height: 64px;
}

.env-shape {
    height: 28px;
}

.knobs,
.knob-labs {
    display: flex;
    gap: 6px;
    padding-left: 10px;
}

.knobs {
    height: 19px;
    align-items: center;
}

.knobs .knob {
    align-self: center;
}

.knob-labs {
    line-height: 7px;
    color: #c8c8c8;
}

.knob-labs span {
    width: 18px;
    text-align: center;
}

.knobs.four,
.knob-labs.four {
    gap: .500px;
    padding-left: 12px;
}

/* distortion */
.m-dist {
    display: flex;
    flex-direction: column;
    align-items: center;
}

.m-dist .title {
    white-space: nowrap;
    margin-bottom: 24px;
    font-size: 5.800px;
}

.m-dist .lab {
    margin-top: 3px;
}

/* mixer */
.m-mixer .title {
    line-height: 8px;
}

.mix-row {
    display: grid;
    grid-template-columns: 30px 4px 24px;
    grid-template-rows: 16px 9px;
    justify-items: center;
    align-items: center;
    padding-left: 3px;
    height: 32.500px;
    padding-bottom: 7px;
}

.s,
.m {
    font-size: 5.500px;
    color: #aaa;
    line-height: 7px;
}

.m {
    color: #c5344a;
}

/* low-pass */
.m-lp {
    display: grid;
    grid-template-columns: 32px 35px 32px;
    grid-template-rows: 10px 42px 12px;
}

.lp-side {
    grid-row: 2 / 4;
    padding: 0;
    gap: 5.500px;
}

.lp-side .pn {
    margin-top: -3px;
}

.lp-main,
.lp-res {
    display: flex;
    flex-direction: column;
    align-items: center;
    padding-top: 8px;
    white-space: nowrap;
}

.lp-main .knob::after {
    width: 2px;
    height: 40%;
    transform-origin: 50% 125%;
    top: 5%;
}

.lp-res {
    padding-top: 11px;
    padding-right: 1px;
    gap: 1px;
}

.lp-foot {
    grid-column: 2 / -1;
    grid-row: 3;
    display: flex;
    gap: 3px;
    color: #c8c8c8;
    padding: 3px 0 0 5px;
    line-height: 7px;
    height: 12px;
}

.lp-foot .sel {
    color: #d08a3e;
    border-bottom: 1px solid #d08a3e;
    height: 8px;
}

.lp-ic {
    margin-left: 4px;
}

/* device panel */
.devices {
    height: 112px;
    margin-top: 2px;
    background: #0e0e0e;
    display: flex;
    border-top: 1px solid #5a5a5a;
}

.vtext {
    writing-mode: vertical-rl;
    transform: rotate(180deg);
    font-size: 5.500px;
    color: #ccc;
    white-space: nowrap;
}

.track-head {
    width: 17px;
    background: #3a3a3a;
    border-left: 3px solid #c24a64;
    display: flex;
    align-items: center;
    justify-content: center;
    margin-left: 1px;
}

.add-gap {
    width: 10px;
    display: flex;
    flex-direction: column;
    align-items: center;
    padding-top: 48px;
    position: relative;
}

.plus {
    color: #ddd;
    font-size: 9px;
    line-height: 9px;
    font-weight: 700;
}

.meter-gap {
    padding-bottom: 7px;
}

.meter {
    width: 4px;
    height: 13px;
    margin-top: auto;
    background: linear-gradient(#b6d878, #5ea83a);
    border-top: 2px solid #dce8b0;
}

.device-main {
    width: 182px;
    margin: 6px 0 7px;
    border: 1px solid #555;
    display: flex;
    background: #2a2a2a;
}

.dev-strip {
    width: 13px;
    background: #3d3d3d;
    display: flex;
    flex-direction: column;
    align-items: center;
    padding: 2px 0 3px;
    gap: 3px;
}

.dev-strip .vtext {
    flex: 1;
    display: flex;
    align-items: center;
    justify-content: center;
}

.dev-strip.lone {
    width: 12px;
    margin: 6px 0 7px;
}

.arrow-ic {
    color: #c5893c;
    font-size: 5px;
    line-height: 5px;
}

.thumbs {
    width: 33px;
    margin-left: 1px;
    display: flex;
    flex-direction: column;
    gap: 1px;
}

.thumb {
    flex: 1;
    background: #1e1e1e;
    padding-top: 1px;
    display: flex;
    flex-direction: column;
    align-items: center;
}

.lnk-b {
    margin-top: 3px;
}

.plus-col {
    width: 15px;
    background: #3a3a3a;
    display: flex;
    flex-direction: column;
    align-items: center;
    justify-content: space-around;
}

.dev-body {
    flex: 1;
    display: flex;
    flex-direction: column;
    gap: 1px;
}

.grid-view {
    background: #0b0b0b;
    width: 120px;
}

.dev-ctrl {
    flex: 1;
    background: #333;
    display: flex;
    padding: 2px 0 0 6px;
}

.ctrl-k {
    width: 25px;
    display: flex;
    flex-direction: column;
    align-items: center;
    gap: 1px;
    color: #c8c8c8;
    line-height: 7px;
}

.fx-box {
    width: 30px;
    height: 27px;
    border: 1px solid #4d4d4d;
    margin: 0 0 0 1px;
    display: flex;
    flex-direction: column;
    padding: 1px;
    gap: 1px;
}

.fx-box span {
    flex: 1;
    background: #3b3b3b;
    text-align: center;
    color: #ddd;
    font-size: 5.500px;
    line-height: 11px;
}

.out-k {
    margin-left: 2px;
}

/* bottom bar */
.bottombar {
    height: 15px;
    background: #333;
    display: flex;
    align-items: center;
    padding-left: 8px;
    gap: 6px;
    color: #ccc;
    font-size: 5.500px;
    border-top: 1px solid #1a1a1a;
}

.bb-i {
    color: #ddd;
    font-size: 7px;
    line-height: 7px;
}

.bb-sep {
    width: 1px;
    height: 9px;
    background: #666;
}

.tab-on {
    color: #d98a30;
}

.sq {
    width: 6px;
    height: 6px;
    border: 1px solid #d98a30;
}

.bb-right {
    margin-left: auto;
    display: flex;
    align-items: center;
    gap: 7px;
    padding-right: 8px;
}

/* watermark over everything */
.watermark {
    position: absolute;
    right: 0;
    bottom: 0;
    width: 123px;
    height: 20px;
    background: rgba(24, 20, 6, .92);
    display: flex;
    align-items: center;
    padding-left: 1px;
    color: #ddd;
}

.wm-g {
    margin-left: -14px;
    width: 9px;
    font-size: 10px;
    text-align: center;
}

.wm-text {
    margin-left: 10px;
    font-size: 14.200px;
    letter-spacing: -.1px;
    white-space: nowrap;
}
```
